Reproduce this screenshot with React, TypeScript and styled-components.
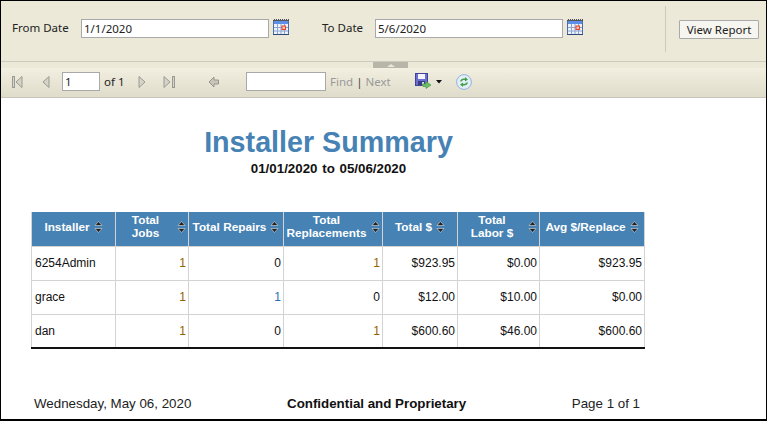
import styled, { createGlobalStyle } from "styled-components";

const GlobalStyle = createGlobalStyle`
  html, body {
    margin: 0;
    padding: 0;
    background: #fff;
  }
  * {
    box-sizing: border-box;
  }
`;

/* ================= FRAME ================= */

const Frame = styled.div`
  width: 767px;
  height: 421px;
  border: 1px solid #000;
  border-width: 1px 1px 2px 1px;
  overflow: hidden;
  display: flex;
  flex-direction: column;
  font-family: "Noto Sans", sans-serif;
`;

const ParamPanel = styled.div`
  height: 60px;
  flex: none;
  background: #ece9d8;
  display: flex;
  align-items: flex-start;
  padding-top: 5px;
`;

const ParamGroup = styled.div`
  display: flex;
  align-items: flex-start;
  padding-top: 13px;
`;

const ParamLabel = styled.label<{ $width: number; $left: number; $pad?: number }>`
  width: ${({ $width }) => $width}px;
  margin-left: ${({ $left }) => $left}px;
  padding-left: ${({ $pad }) => $pad ?? 0}px;
  font-size: 11.5px;
  line-height: 18px;
  color: #222;
`;

const ParamInput = styled.div`
  width: 188px;
  height: 19px;
  background: #fff;
  border: 1px solid #a9a9a9;
  font-size: 11.5px;
  line-height: 18px;
  padding-left: 2px;
  color: #222;
`;

const CalendarSlot = styled.div`
  width: 16px;
  height: 16px;
  margin: -1px 0 0 4px;
`;

const ParamDivider = styled.div`
  width: 1px;
  height: 46px;
  background: #cdcbbd;
  margin-left: 82px;
`;

const ViewButton = styled.button`
  width: 80px;
  height: 19px;
  margin: 14px 0 0 13px;
  padding: 0;
  background: #f6f5ef;
  border: 1px solid #a9a9a9;
  border-radius: 1px;
  font-family: "Noto Sans", sans-serif;
  font-size: 11.5px;
  line-height: 16px;
  color: #222;
`;

const Splitter = styled.div`
  height: 7px;
  flex: none;
  background: #ece9d8;
  border-top: 1px solid #cdcbbd;
  display: flex;
  justify-content: center;
  padding-left: 14px;
`;

const Grip = styled.div`
  width: 35px;
  height: 6px;
  background: #b8b6a8;
  display: flex;
  justify-content: center;
  align-items: center;
`;

const GripArrow = styled.div`
  width: 0;
  height: 0;
  border-left: 4px solid transparent;
  border-right: 4px solid transparent;
  border-bottom: 3px solid #e9e7dc;
`;

const Toolbar = styled.div`
  height: 30px;
  flex: none;
  display: flex;
  align-items: center;
  padding-bottom: 2px;
  background: linear-gradient(#f3f0e2 0, #efecdd 15%, #dfdccb 100%);
  border-bottom: 1px solid #c8c6b8;
  font-size: 11.5px;
  color: #222;
`;

const IconSlot = styled.div<{ $left: number; $width?: number }>`
  width: ${({ $width }) => $width ?? 12}px;
  height: 16px;
  margin-left: ${({ $left }) => $left}px;
  flex: none;
  display: flex;
  align-items: center;
`;

const PageInput = styled.div`
  width: 38px;
  height: 19px;
  margin-left: 12px;
  background: #fff;
  border: 1px solid #a9a9a9;
  line-height: 18px;
  padding-left: 2px;
`;

const OfText = styled.span`
  margin-left: 4px;
  width: 32px;
`;

const FindInput = styled.div`
  width: 80px;
  height: 19px;
  margin-left: 26px;
  background: #fff;
  border: 1px solid #a9a9a9;
`;

const FindLink = styled.span<{ $left: number }>`
  margin-left: ${({ $left }) => $left}px;
  color: #999;
`;

const FindBar = styled.span`
  margin-left: 3px;
  color: #444;
`;

/* ================= REPORT ================= */

const Report = styled.div`
  flex: 1;
  background: #fff;
  padding-left: 30px;
  font-family: "Liberation Sans", Arial, sans-serif;
`;

const TitleBlock = styled.div`
  width: 595px;
  text-align: center;
  padding-top: 27px;
`;

const Title = styled.h1`
  margin: 0;
  font-size: 28.7px;
  line-height: 34px;
  font-weight: 700;
  color: #4682b4;
`;

const DateRange = styled.div`
  margin-top: 2px;
  font-size: 13.33px;
  line-height: 16px;
  font-weight: 700;
  word-spacing: 1px;
  color: #111;
`;

const Table = styled.table`
  width: 613px;
  margin-top: 35px;
  border-collapse: collapse;
  table-layout: fixed;
  font-size: 12px;
`;

const HeadCell = styled.th`
  height: 34px;
  padding: 0 2px 3px;
  background: #4682b4;
  color: #fff;
  font-size: 11.8px;
  line-height: 13px;
  font-weight: 700;
  border-left: 1px solid #d3d3d3;
  border-right: 1px solid #d3d3d3;
`;

const HeadInner = styled.div`
  display: flex;
  align-items: center;
  justify-content: center;
  gap: 4px;
`;

const HeadLabel = styled.span<{ $grow?: boolean }>`
  flex: ${({ $grow }) => ($grow ? 1 : "none")};
  text-align: center;
`;

const Cell = styled.td<{ $align?: string; $color?: string }>`
  height: 34px;
  padding: 0 2px 0 3px;
  text-align: ${({ $align }) => $align ?? "right"};
  color: ${({ $color }) => $color ?? "#111"};
  border: 1px solid #d3d3d3;
`;

const LastRow = styled.tr`
  td {
    border-bottom: 2px solid #111;
  }
`;

const Footer = styled.div`
  width: 613px;
  margin-top: 47px;
  padding: 0 4px 0 3px;
  display: grid;
  grid-template-columns: 253px 1fr auto;
  font-size: 13.33px;
  line-height: 16px;
  color: #222;
`;

const FooterCenter = styled.span`
  font-weight: 700;
  color: #111;
`;

/* ================= ICONS ================= */

const SortIcon = () => (
  <svg width="9" height="12" viewBox="0 0 9 12" style={{ flex: "none" }}>
    <path d="M4.5 0.5 L8 4.5 H1 Z" fill="#222" stroke="#ddd" strokeWidth="0.6" />
    <path d="M1 7.5 H8 L4.5 11.5 Z" fill="#222" stroke="#ddd" strokeWidth="0.6" />
  </svg>
);

const CalendarIcon = () => (
  <svg width="16" height="16" viewBox="0 0 16 16">
    <rect x="0" y="0" width="16" height="2" fill="#555" />
    <path d="M0 0.5h1M2 0.5h1M4 0.5h1M6 0.5h1M8 0.5h1M10 0.5h1M12 0.5h1M14 0.5h1" stroke="#ddd" strokeWidth="1" />
    <rect x="0" y="2" width="16" height="14" fill="#4a6fa5" />
    <rect x="1" y="2" width="14" height="3" fill="#5b8fe8" />
    <rect x="1" y="5" width="14" height="10" fill="#eef3fb" />
    <path d="M4.5 5v10M8 5v10M11.5 5v10M1 8.5h14M1 12h14" stroke="#8aa6d6" strokeWidth="1" />
    <rect x="9" y="7" width="3.5" height="3.5" fill="#f7c9b8" stroke="#e8452c" strokeWidth="1.1" />
    <rect x="0" y="15" width="16" height="1" fill="#2f4a78" />
  </svg>
);

const NavIcon = ({ dir, bar }: { dir: "left" | "right"; bar?: boolean }) => {
  const tri = dir === "left" ? "M11 1.5 V12.5 L5 7 Z" : "M1 1.5 V12.5 L7 7 Z";
  const barX = dir === "left" ? 1 : 9;
  return (
    <svg width="12" height="14" viewBox="0 0 12 14">
      <path d={tri} fill="#d6d4c8" stroke="#9a9a92" strokeWidth="1" />
      {bar && <rect x={barX + 0.5} y="1.5" width="2" height="11" fill="#d6d4c8" stroke="#9a9a92" strokeWidth="1" />}
    </svg>
  );
};

const BackIcon = () => (
  <svg width="12" height="12" viewBox="0 0 12 12">
    <path d="M6 1 L1 6 L6 11 V8 H10.5 V4 H6 Z" fill="#c8c6ba" stroke="#96958c" strokeWidth="1" />
  </svg>
);

const SaveIcon = () => (
  <svg width="17" height="17" viewBox="0 0 17 17">
    <rect x="0.5" y="0.5" width="12" height="12" fill="#6a6fd0" stroke="#3f4296" strokeWidth="1" />
    <rect x="3" y="1" width="7" height="5" fill="#f4f4fa" />
    <rect x="3" y="8" width="7" height="4" fill="#3a3d80" />
    <rect x="7" y="9" width="2" height="3" fill="#dcdcec" />
    <path d="M7 11 H11 V8.5 L16 12 L11 15.5 V13.5 H8 Z" fill="#6cbf66" stroke="#4a9a4a" strokeWidth="0.7" />
  </svg>
);

const CaretIcon = () => (
  <svg width="6" height="4" viewBox="0 0 6 4">
    <path d="M0 0 H6 L3 3.5 Z" fill="#111" />
  </svg>
);

const RefreshIcon = () => (
  <svg width="16" height="16" viewBox="0 0 16 16">
    <circle cx="8" cy="8" r="7.4" fill="#e4eef8" stroke="#8db4de" strokeWidth="1" />
    <path d="M4 7.5 C4.5 5 7 4 9 4.6 V3 L12 5.6 L9 7.6 V6.2 C7.5 5.8 6 6.4 5.6 7.5 Z" fill="#3fa143" />
    <path d="M12 8.5 C11.5 11 9 12 7 11.4 V13 L4 10.4 L7 8.4 V9.8 C8.5 10.2 10 9.6 10.4 8.5 Z" fill="#3fa143" />
  </svg>
);

/* ================= DATA ================= */

const ORANGE = "#946000";
const BLUE = "#1f6fb2";

const columns = [
  { width: 84, label: "Installer" },
  { width: 73, label: "Total\nJobs", grow: true },
  { width: 95, label: "Total Repairs" },
  { width: 99, label: "Total\nReplacements", grow: true },
  { width: 75, label: "Total $" },
  { width: 82, label: "Total\nLabor $", grow: true },
  { width: 105, label: "Avg $/Replace" },
];

const rows = [
  { name: "6254Admin", jobs: "1", repairs: "0", repairsColor: "#111", repl: "1", replColor: ORANGE, total: "$923.95", labor: "$0.00", avg: "$923.95" },
  { name: "grace", jobs: "1", repairs: "1", repairsColor: BLUE, repl: "0", replColor: "#111", total: "$12.00", labor: "$10.00", avg: "$0.00" },
  { name: "dan", jobs: "1", repairs: "0", repairsColor: "#111", repl: "1", replColor: ORANGE, total: "$600.60", labor: "$46.00", avg: "$600.60" },
];

const App = () => {
  return (
    <Frame>
      <GlobalStyle />
      <ParamPanel>
        <ParamGroup>
          <ParamLabel $width={80} $left={0} $pad={11}>From Date</ParamLabel>
          <ParamInput>1/1/2020</ParamInput>
          <CalendarSlot><CalendarIcon /></CalendarSlot>
          <ParamLabel $width={53} $left={33}>To Date</ParamLabel>
          <ParamInput>5/6/2020</ParamInput>
          <CalendarSlot><CalendarIcon /></CalendarSlot>
        </ParamGroup>
        <ParamDivider />
        <ViewButton>View Report</ViewButton>
      </ParamPanel>
      <Splitter>
        <Grip><GripArrow /></Grip>
      </Splitter>
      <Toolbar>
        <IconSlot $left={10}><NavIcon dir="left" bar /></IconSlot>
        <IconSlot $left={15}><NavIcon dir="left" /></IconSlot>
        <PageInput>1</PageInput>
        <OfText>of 1</OfText>
        <IconSlot $left={2}><NavIcon dir="right" /></IconSlot>
        <IconSlot $left={13}><NavIcon dir="right" bar /></IconSlot>
        <IconSlot $left={33}><BackIcon /></IconSlot>
        <FindInput />
        <FindLink $left={4}>Find</FindLink>
        <FindBar>|</FindBar>
        <FindLink $left={3}>Next</FindLink>
        <IconSlot $left={24} $width={17}><SaveIcon /></IconSlot>
        <IconSlot $left={4} $width={6}><CaretIcon /></IconSlot>
        <IconSlot $left={14} $width={16}><RefreshIcon /></IconSlot>
      </Toolbar>
      <Report>
        <TitleBlock>
          <Title>Installer Summary</Title>
          <DateRange>01/01/2020 to 05/06/2020</DateRange>
        </TitleBlock>
        <Table>
          <colgroup>
            {columns.map((c) => (
              <col key={c.label} width={c.width} />
            ))}
          </colgroup>
          <thead>
            <tr>
              {columns.map((c) => {
                const [first, second] = c.label.split("\n");
                return (
                  <HeadCell key={c.label}>
                    <HeadInner>
                      <HeadLabel $grow={c.grow}>
                        {first}
                        {second && <br />}
                        {second}
                      </HeadLabel>
                      <SortIcon />
                    </HeadInner>
                  </HeadCell>
                );
              })}
            </tr>
          </thead>
          <tbody>
            {rows.map((r, i) => {
              const cells = (
                <>
                  <Cell $align="left">{r.name}</Cell>
                  <Cell $color={ORANGE}>{r.jobs}</Cell>
                  <Cell $color={r.repairsColor}>{r.repairs}</Cell>
                  <Cell $color={r.replColor}>{r.repl}</Cell>
                  <Cell>{r.total}</Cell>
                  <Cell>{r.labor}</Cell>
                  <Cell>{r.avg}</Cell>
                </>
              );
              return i === rows.length - 1 ? (
                <LastRow key={r.name}>{cells}</LastRow>
              ) : (
                <tr key={r.name}>{cells}</tr>
              );
            })}
          </tbody>
        </Table>
        <Footer>
          <span>Wednesday, May 06, 2020</span>
          <FooterCenter>Confidential and Proprietary</FooterCenter>
          <span>Page 1 of 1</span>
        </Footer>
      </Report>
    </Frame>
  );
};

export default App;
